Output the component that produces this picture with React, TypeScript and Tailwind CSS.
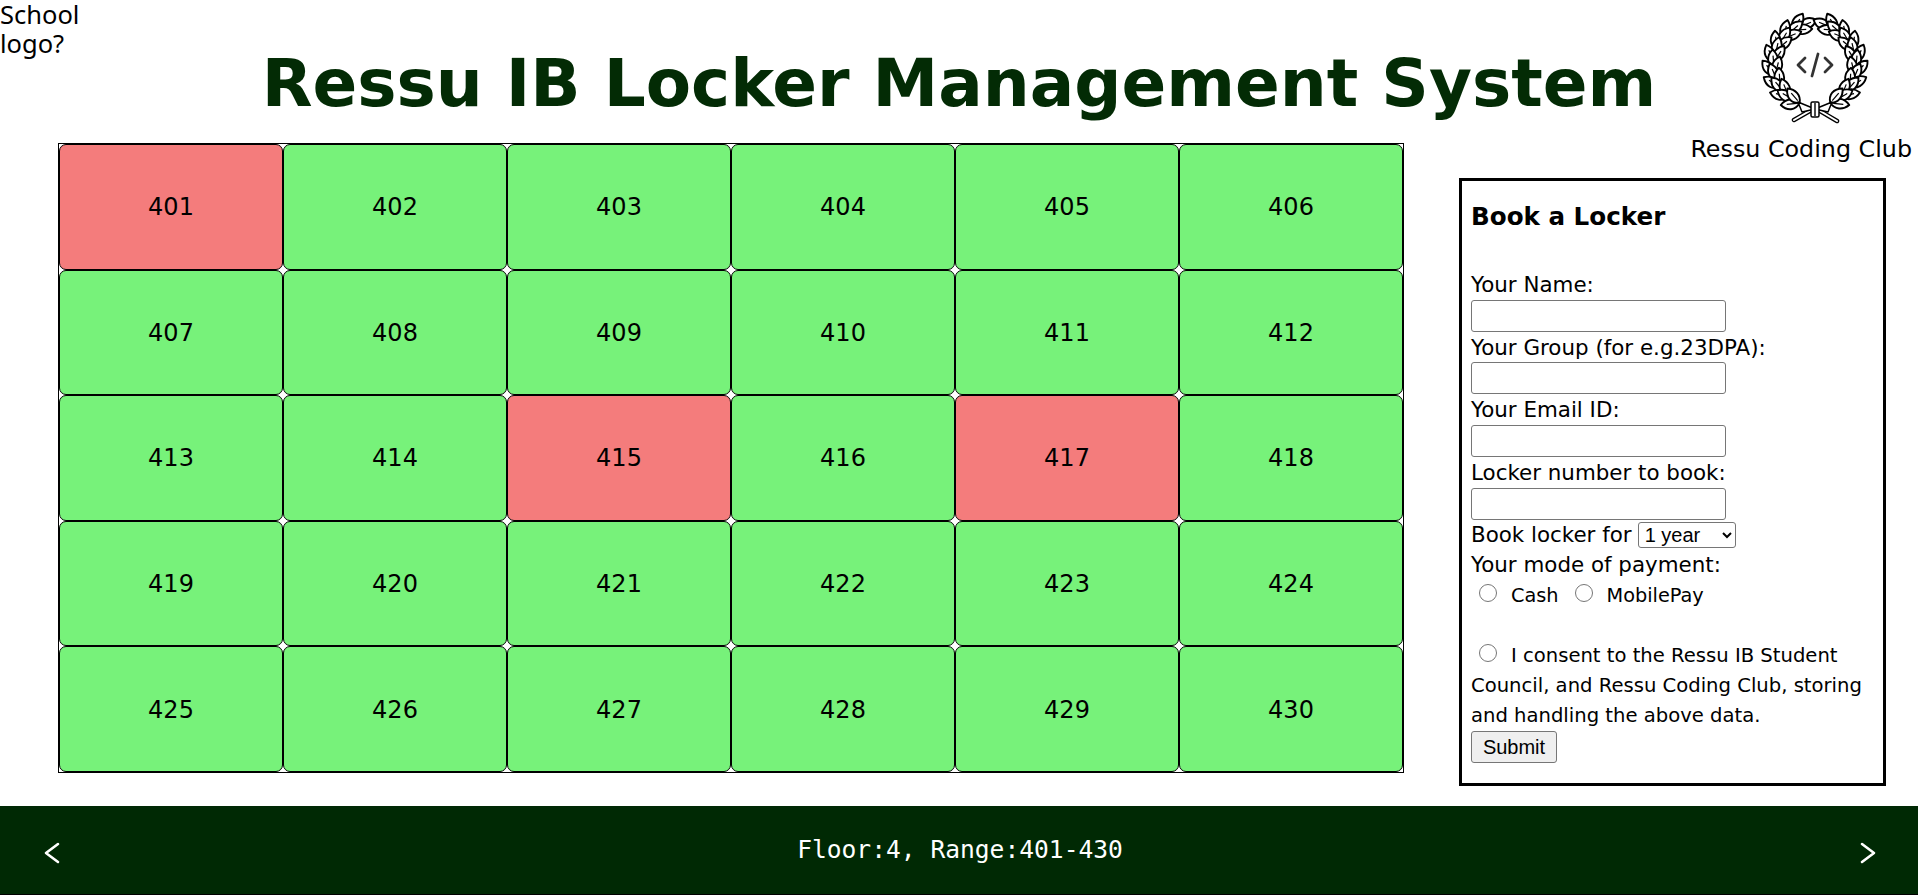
import React from 'react';

const TAKEN = [401, 415, 417];
const LOCKERS = Array.from({ length: 30 }, (_, i) => 401 + i);

// Wreath leaves are placed around a circle, so they get computed here
const Leaf = ({ angle, side, spread }: { angle: number; side: number; spread: number }) => {
  const rad = (angle * Math.PI) / 180;
  const r = 41;
  const x = 55 + side * r * Math.sin(rad);
  const y = 53 + r * Math.cos(rad);
  const tangent = (Math.atan2(-Math.sin(rad), side * Math.cos(rad)) * 180) / Math.PI;
  return (
    <g transform={`translate(${x} ${y}) rotate(${tangent + spread * side})`}>
      <path d="M0 0C5-7 13-7 19 0C13 6 5 6 0 0Z" fill="white" stroke="black" strokeWidth="1.9" strokeLinejoin="round" />
      <path d="M3 0H13" stroke="black" strokeWidth="1.2" />
    </g>
  );
};

const WreathLogo = () => {
  const angles = [148, 130, 112, 94, 76, 58, 40, 22];
  return (
    <svg width="110" height="112" viewBox="0 0 110 112" className="block">
      {[-1, 1].map((side) => (
        <React.Fragment key={side}>
          {angles.map((a) => (
            <React.Fragment key={a}>
              <Leaf angle={a + 9} side={side} spread={0} />
              <Leaf angle={a} side={side} spread={28} />
              <Leaf angle={a} side={side} spread={-28} />
            </React.Fragment>
          ))}
        </React.Fragment>
      ))}
      <path d="M34 108L55 96L77 109" fill="none" stroke="black" strokeWidth="4.5" strokeLinecap="round" />
      <path d="M34 108L55 96L77 109" fill="none" stroke="white" strokeWidth="2" strokeLinecap="round" />
      <path d="M38 90L55 97L72 90L68 100L55 97L42 100Z" fill="white" stroke="black" strokeWidth="1.5" strokeLinejoin="round" />
      <rect x="51" y="90" width="8" height="15" rx="1.5" fill="white" stroke="black" strokeWidth="1.5" />
      <path d="M55 91V104" stroke="black" strokeWidth="1.4" />
      <path d="M45 46L38 53L45 60M65 46L72 53L65 60" fill="none" stroke="#333" strokeWidth="2.8" strokeLinecap="round" strokeLinejoin="round" />
      <path d="M58 42L52 64" fill="none" stroke="#333" strokeWidth="2.8" strokeLinecap="round" />
    </svg>
  );
};

const Chevron = ({ right }: { right?: boolean }) => (
  <svg width="16" height="22" viewBox="0 0 16 22" className="mt-[6px]">
    <polyline
      points={right ? '2,2 14,11 2,20' : '14,2 2,11 14,20'}
      fill="none"
      stroke="white"
      strokeWidth="2.6"
      strokeLinecap="round"
      strokeLinejoin="round"
    />
  </svg>
);

const TextField = ({ label }: { label: string }) => (
  <div>
    <label className="block h-[30.7px] leading-[32px]">{label}</label>
    <input type="text" className="block w-[255px] h-[32px] border border-[#767676] rounded-[3px] bg-white" />
  </div>
);

export default function App() {
  return (
    <div className="w-[1918px] h-[895px] bg-white overflow-hidden flex flex-col font-['DejaVu_Sans',sans-serif] text-black">
      {/* Header */}
      <header className="grid grid-cols-[1fr_auto_1fr] h-[143px]">
        <div className="font-['Noto_Sans',sans-serif] text-[25.5px] leading-[29px] w-[90px]">School logo?</div>
        <h1 className="text-[66px] leading-[168px] font-bold text-[#032b05] whitespace-nowrap">
          Ressu IB Locker Management System
        </h1>
        <div className="flex flex-col items-end h-[170px] pr-[6px]">
          <div className="mr-[42px] mt-[12px]">
            <WreathLogo />
          </div>
          <div className="text-[23.8px] leading-[28px] mt-[11px] whitespace-nowrap">Ressu Coding Club</div>
        </div>
      </header>

      <main className="flex">
        {/* Locker grid */}
        <div className="grid grid-cols-6 w-[1346px] h-[630px] ml-[58px] border border-black">
          {LOCKERS.map((n) => (
            <div
              key={n}
              className={`flex items-center justify-center border border-black rounded-[7px] text-[24px] pt-[1px] ${
                TAKEN.includes(n) ? 'bg-[#f47c7c]' : 'bg-[#77f27a]'
              }`}
            >
              {n}
            </div>
          ))}
        </div>

        {/* Booking form */}
        <form className="w-[427px] h-[608px] ml-[55px] mt-[35px] border-[3px] border-black px-[9px] text-[21.4px]">
          <h3 className="font-bold text-[24.6px] leading-[28px] mt-[22px] mb-[38px]">Book a Locker</h3>
          <TextField label="Your Name:" />
          <TextField label="Your Group (for e.g.23DPA):" />
          <TextField label="Your Email ID:" />
          <TextField label="Locker number to book:" />
          <div className="flex items-center h-[30px] gap-[6px]">
            <span>Book locker for</span>
            <select className="w-[98px] h-[26px] border border-[#767676] rounded-[3px] bg-white font-['Liberation_Sans',sans-serif] text-[20px] leading-[24px] pl-[2px]">
              <option>1 year</option>
            </select>
          </div>
          <div className="h-[30px] leading-[30px]">Your mode of payment:</div>
          <div className="flex items-center h-[32px] text-[19.3px]">
            <input type="radio" name="pay" className="w-[18px] h-[18px] ml-[8px] mr-[14px] -mt-[5px]" />
            <span className="pt-[2px]">Cash</span>
            <input type="radio" name="pay" className="w-[18px] h-[18px] ml-[16px] mr-[14px] -mt-[5px]" />
            <span className="pt-[2px]">MobilePay</span>
          </div>
          <p className="mt-[29px] text-[19.6px] leading-[30px]">
            <input type="radio" className="inline-block w-[18px] h-[18px] ml-[8px] mr-[14px] align-[0px]" />
            I consent to the Ressu IB Student Council, and Ressu Coding Club, storing and handling the above data.
          </p>
          <button
            type="button"
            className="block w-[86px] h-[32px] border border-[#767676] rounded-[3px] bg-[#efefef] font-['Liberation_Sans',sans-serif] text-[20px] leading-[24px]"
          >
            Submit
          </button>
        </form>
      </main>

      {/* Footer nav */}
      <footer className="mt-auto h-[89px] bg-[#002904] border-b border-black flex items-center justify-between pl-[44px] pr-[42px]">
        <Chevron />
        <span className="font-['DejaVu_Sans_Mono',monospace] text-[24.6px] text-white">Floor:4, Range:401-430</span>
        <Chevron right />
      </footer>
    </div>
  );
}
